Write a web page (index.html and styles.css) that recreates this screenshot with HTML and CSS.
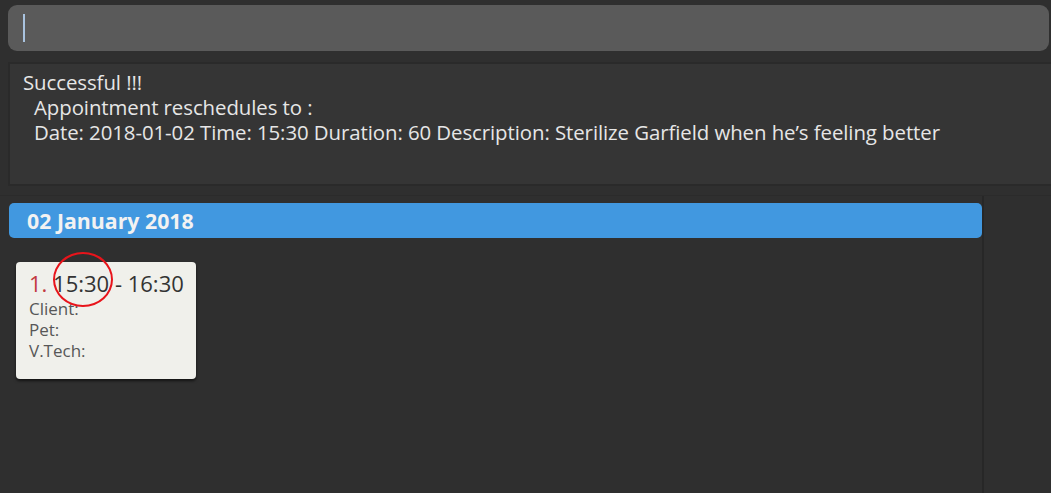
FILE: index.html
```html
<!DOCTYPE html>
<html>
<head>
<meta charset="utf-8">
<link rel="stylesheet" href="styles.css">
</head>
<body>
<div class="app">
  <div class="command">
    <span class="caret"></span>
  </div>
  <div class="result">
    <div class="line">Successful !!!</div>
    <div class="line indent">Appointment reschedules to :</div>
    <div class="line indent">Date: 2018-01-02 Time: 15:30 Duration: 60 Description: Sterilize Garfield when he’s feeling better</div>
  </div>
  <div class="main">
    <div class="list">
      <div class="day-header">02 January 2018</div>
      <div class="cards">
        <div class="card">
          <div class="card-title"><span class="idx">1.</span> <span class="time">15:30</span> - 16:30</div>
          <div class="field">Client:</div>
          <div class="field">Pet:</div>
          <div class="field">V.Tech:</div>
          <span class="circle"></span>
        </div>
      </div>
    </div>
    <div class="side"></div>
  </div>
</div>
</body>
</html>
```
FILE: styles.css
```css
html, body {
  margin: 0;
  padding: 0;
  background: #2f2f2f;
  height: 100%;
  overflow: hidden;
}
body {
  font-family: "Open Sans", "Noto Sans", sans-serif;
}
.app {
  display: flex;
  flex-direction: column;
  height: 493px;
  width: 1051px;
}
.command {
  margin: 5px 2px 0 8px;
  height: 46px;
  background: #5a5a5a;
  border-radius: 9px;
  display: flex;
  align-items: center;
  padding-left: 15px;
}
.caret {
  width: 2px;
  height: 28px;
  background: #a9c3df;
}
.result {
  margin: 11px -10px 0 8px;
  height: 124px;
  box-sizing: border-box;
  background: #353535;
  border: 2px solid #2a2a2a;
  padding: 6px 0 0 13px;
  color: #e6e6e6;
  font-size: 20.4px;
  line-height: 25px;
  letter-spacing: -0.07px;
}
.line {
  height: 25px;
  white-space: nowrap;
}
.indent {
  padding-left: 11px;
}
.main {
  flex: 1;
  display: flex;
  margin-top: 9px;
  border-top: 1px solid #2b2b2b;
}
.list {
  width: 984px;
  box-sizing: border-box;
  padding: 7px 0 0 9px;
  border-right: 2px solid #272727;
}
.day-header {
  width: 973px;
  height: 35px;
  box-sizing: border-box;
  background: #4198e0;
  border-radius: 5px;
  color: #f2f2f2;
  font-weight: bold;
  font-size: 21.3px;
  line-height: 35px;
  padding-left: 18px;
}
.cards {
  padding: 24px 0 0 7px;
}
.card {
  position: relative;
  width: 180px;
  height: 117px;
  box-sizing: border-box;
  background: #f0f0eb;
  border-radius: 4px;
  box-shadow: 0 2px 3px rgba(0,0,0,0.6);
  padding: 6px 0 0 13px;
  color: #555;
}
.card-title {
  font-size: 22px;
  line-height: 30px;
  color: #333;
}
.idx {
  color: #c2393f;
}
.field {
  font-size: 17px;
  line-height: 21px;
  height: 21px;
  color: #575757;
}
.circle {
  position: absolute;
  left: 37px;
  top: -10px;
  width: 60px;
  height: 55px;
  box-sizing: border-box;
  border: 2px solid #e8141b;
  border-radius: 50%;
}
.side {
  flex: 1;
}
```
